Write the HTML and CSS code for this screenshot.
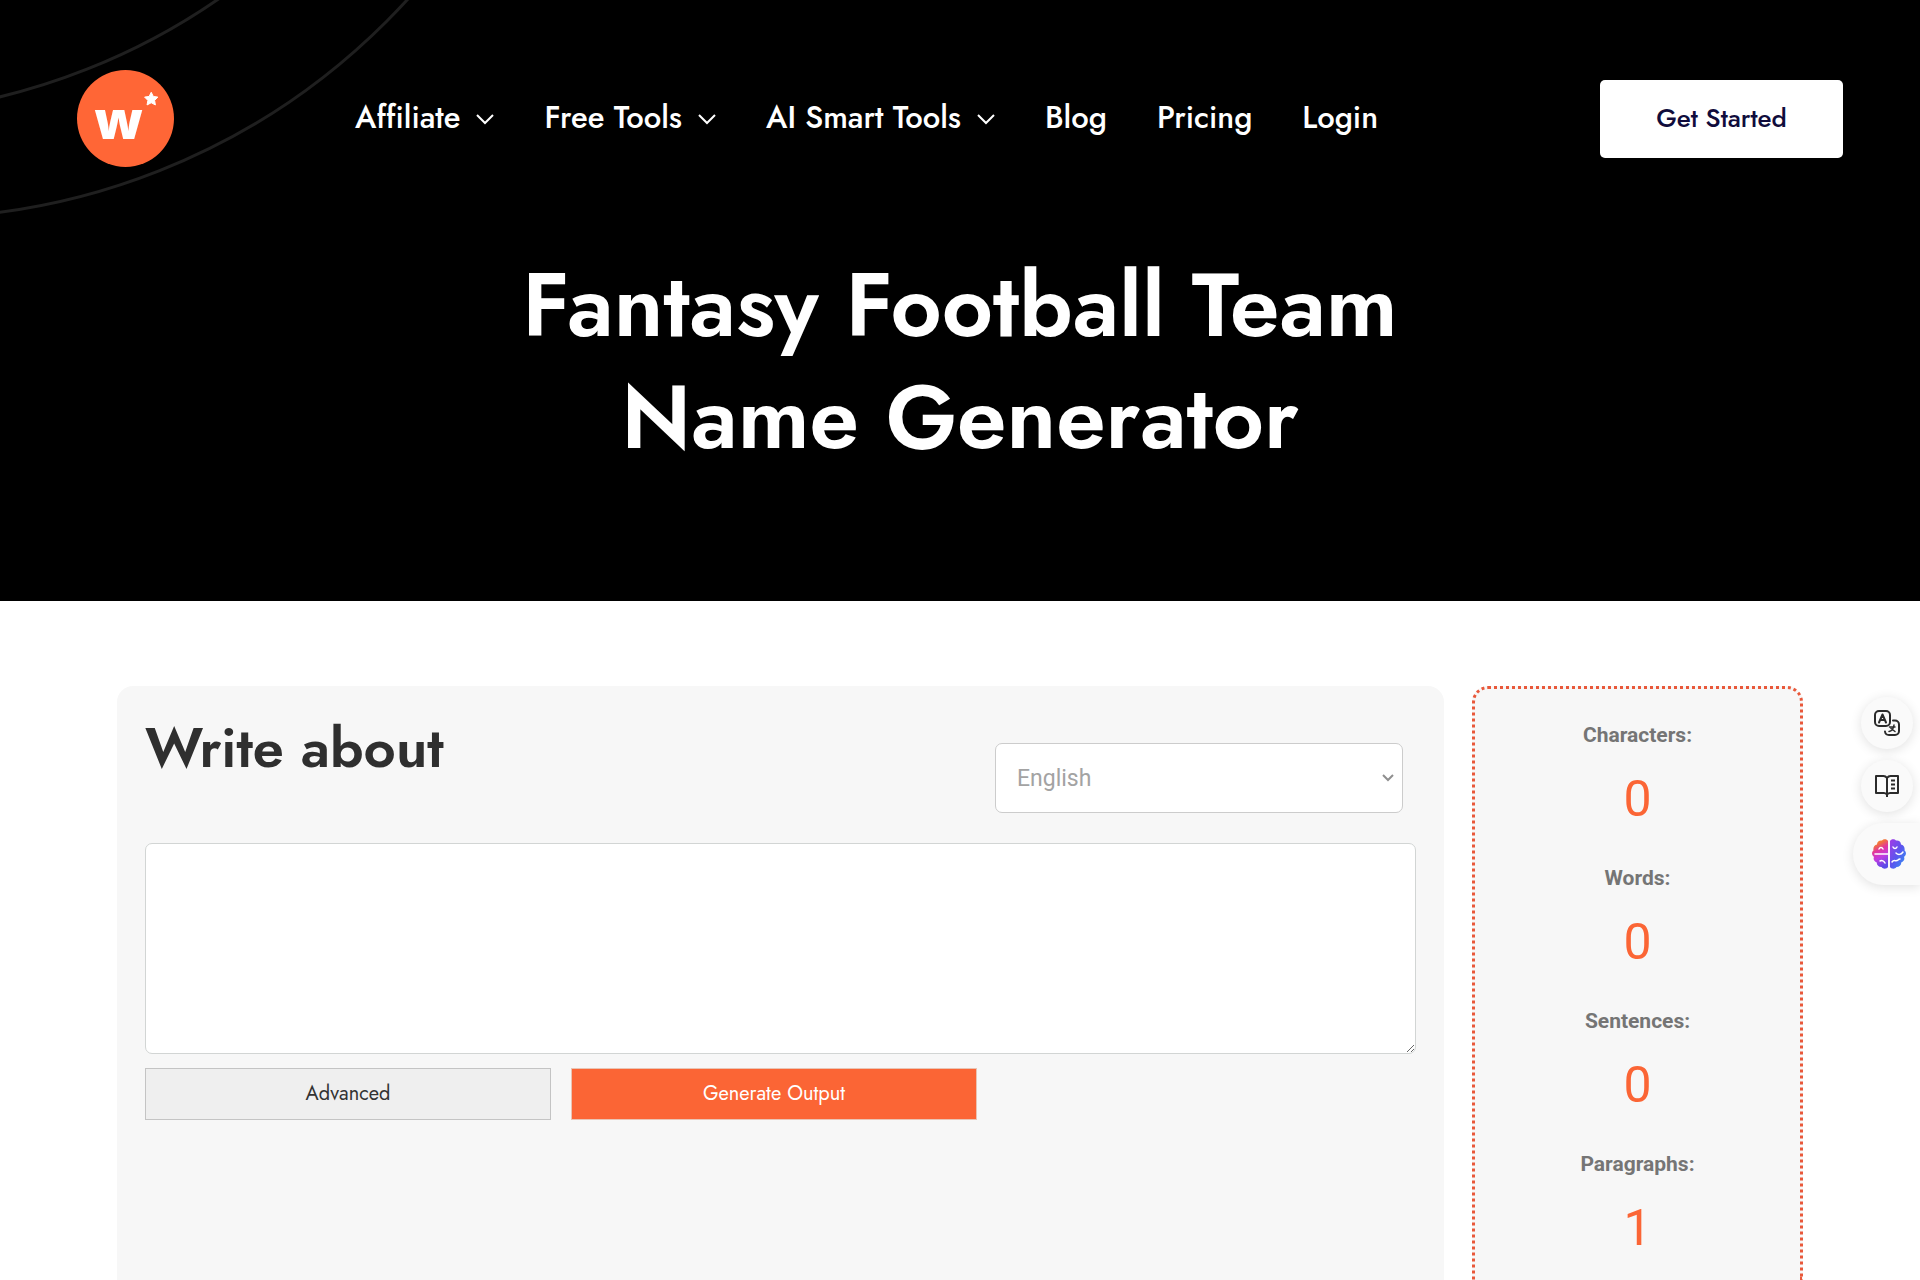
FILE: index.html
```html
<!DOCTYPE html>
<html lang="en">
<head>
  <meta charset="UTF-8">
  <meta name="viewport" content="width=device-width, initial-scale=1.0">
  <title>Fantasy Football Team Name Generator</title>
  <link rel="stylesheet" href="styles.css">
</head>
<body>
  <!-- Hero -->
  <div class="hero">
    <svg class="hero-lines" width="480" height="240" viewBox="0 0 480 240" fill="none" stroke="#1f1f1f" stroke-width="3" aria-hidden="true">
      <circle cx="-153" cy="-537" r="652"/>
      <circle cx="-88" cy="-453" r="671"/>
    </svg>

    <header class="header">
      <a class="logo" href="#" aria-label="Home">
        <svg width="97" height="97" viewBox="0 0 98 98">
          <circle cx="49" cy="49" r="49" fill="#ff6636"/>
          <text class="logo-letter" x="42" y="70" text-anchor="middle">w</text>
          <path d="M75 22.500l2.100 4.200 4.600.7-3.300 3.300.8 4.600-4.200-2.200-4.200 2.200.8-4.600-3.300-3.300 4.600-.7z" fill="#fff" stroke="#fff" stroke-linejoin="round"/>
        </svg>
      </a>
      <nav class="nav">
        <a href="#">Affiliate <svg class="chevron" viewBox="0 0 18 12"><path d="M1 2l8 8 8-8"/></svg></a>
        <a href="#">Free Tools <svg class="chevron" viewBox="0 0 18 12"><path d="M1 2l8 8 8-8"/></svg></a>
        <a href="#">AI Smart Tools <svg class="chevron" viewBox="0 0 18 12"><path d="M1 2l8 8 8-8"/></svg></a>
        <a href="#">Blog</a>
        <a href="#">Pricing</a>
        <a href="#">Login</a>
      </nav>
      <a class="get-started" href="#">Get Started</a>
    </header>

    <h1>Fantasy Football Team Name Generator</h1>
  </div>

  <!-- Tool -->
  <main class="tool">
    <form class="panel">
      <div class="panel-head">
        <h2><label for="about">Write about</label></h2>
        <div class="language">
          <select aria-label="Language">
            <option>English</option>
          </select>
          <svg class="language-arrow" viewBox="0 0 14 10" aria-hidden="true"><path d="M2 2l5 5 5-5"/></svg>
        </div>
      </div>
      <textarea id="about"></textarea>
      <div class="actions">
        <button type="button" class="btn">Advanced</button>
        <button type="button" class="btn btn-primary">Generate Output</button>
      </div>
    </form>

    <dl class="stats">
      <div><dt>Characters:</dt><dd id="characters">0</dd></div>
      <div><dt>Words:</dt><dd id="words">0</dd></div>
      <div><dt>Sentences:</dt><dd id="sentences">0</dd></div>
      <div><dt>Paragraphs:</dt><dd id="paragraphs">1</dd></div>
    </dl>
  </main>

  <!-- Floating buttons -->
  <aside class="side">
    <button type="button" class="side-btn" aria-label="Translate">
      <svg width="26" height="26" viewBox="0 0 26 26" fill="none" stroke="#2b2b2b" stroke-width="2" stroke-linecap="round" stroke-linejoin="round">
        <rect x="1" y="1" width="15" height="15" rx="4"/>
        <path d="M5 12.500l3.500-8 3.500 8M6.200 10h4.600"/>
        <path d="M19 10.500h2a4 4 0 0 1 4 4V21a4 4 0 0 1-4 4h-6a4 4 0 0 1-4-3.500"/>
        <path d="M15 21.500c3-.5 4.500-3 5-6.500M15.500 17h5.500M17 18.500l4 3" stroke-width="1.500"/>
      </svg>
    </button>
    <button type="button" class="side-btn" aria-label="Read">
      <svg width="26" height="24" viewBox="0 0 26 24" fill="none" stroke="#2b2b2b" stroke-width="2" stroke-linejoin="round">
        <path d="M13 4c-1-1.400-2-2-3.500-2H2v17h8c1.500 0 2.500.7 3 2 .5-1.300 1.500-2 3-2h8V2h-7.500C15 2 14 2.600 13 4zM13 4v19"/>
        <path d="M17 6.500h4M17 10.500h4M17 14.500h4"/>
      </svg>
    </button>
    <button type="button" class="side-btn side-tab" aria-label="Assistant">
      <svg width="34" height="32" viewBox="0 0 34 32">
        <defs>
          <linearGradient id="brainLeft" x1="0.200" y1="0" x2="0.500" y2="1">
            <stop offset="0" stop-color="#f9a02e"/>
            <stop offset="0.200" stop-color="#f2703f"/>
            <stop offset="0.400" stop-color="#e0369f"/>
            <stop offset="0.650" stop-color="#c23be0"/>
            <stop offset="1" stop-color="#5a4be8"/>
          </linearGradient>
          <linearGradient id="brainRight" x1="0" y1="0" x2="1" y2="1">
            <stop offset="0" stop-color="#a43be6"/>
            <stop offset="0.500" stop-color="#5a55ee"/>
            <stop offset="1" stop-color="#2f9df4"/>
          </linearGradient>
        </defs>
        <path fill="url(#brainLeft)" d="M16 3v26c-1 2-5 2.500-6.500 0-3 0-5-2-4.700-4.500C2 23.500 1 21 2 19-.5 17-.5 14 1.500 12.500.8 9.500 2.500 7 5 6.500 5 3.500 7.500 2 10 2.500 11.500.5 15 .8 16 3z"/>
        <path fill="url(#brainRight)" d="M18 3v26c1 2 5 2.500 6.500 0 3 0 5-2 4.700-4.500 2.800-1 3.800-3.500 2.800-5.500 2.500-2 2.500-5 .5-6.500.7-3-1-5.500-3.500-6 0-3-2.500-4.500-5-4C22.500.5 19 .8 18 3z"/>
        <path fill="none" stroke="#fff" stroke-width="1.500" stroke-linecap="round" d="M3 16h13M7 11c1-2 3-2 4 0M8 23c2-1 4 0 5 2M21 9c1 2 3 2 4 0M31 14c-2 3-5 3-7 1M20 24c2-3 4 0 6-2 1-1 2-1 2-1"/>
      </svg>
    </button>
  </aside>
</body>
</html>
```
FILE: styles.css
```css
* {
  box-sizing: border-box;
}
body {
  margin: 0;
  min-height: 100vh;
  display: flex;
  flex-direction: column;
  background-color: #fff;
  font-family: Roboto, sans-serif;
}
h1, h2, .nav, .get-started, .btn {
  font-family: Jost, Lato, sans-serif;
}

/* Hero */
.hero {
  position: relative;
  padding: 70px 77px 128px;
  background-color: #000;
  color: #fff;
}
.hero-lines {
  position: absolute;
  top: 0;
  left: 0;
}
.header {
  position: relative;
  display: flex;
  align-items: center;
}
.logo, .logo svg {
  display: block;
}
.logo-letter {
  font-family: "Open Sans", sans-serif;
  font-size: 54px;
  font-weight: 800;
  fill: #fff;
}
.nav {
  display: flex;
  gap: 50px;
  margin-left: 181px;
  padding-bottom: 2px;
  font-size: 31px;
  font-weight: 500;
}
.nav a {
  display: flex;
  align-items: center;
  gap: 16px;
  color: #fff;
  text-decoration: none;
}
.chevron {
  width: 18px;
  height: 12px;
  margin-top: 2px;
  fill: none;
  stroke: #fff;
  stroke-width: 2;
}
.get-started {
  width: 243px;
  margin-left: auto;
  padding-bottom: 2px;
  border-radius: 5px;
  background-color: #fff;
  color: #100c3c;
  font-size: 26px;
  font-weight: 500;
  line-height: 76px;
  text-align: center;
  text-decoration: none;
}
h1 {
  max-width: 960px;
  margin: 82px auto 0;
  font-size: 89px;
  font-weight: 600;
  line-height: 112px;
  text-align: center;
}

/* Tool */
.tool {
  flex: 1;
  display: flex;
  gap: 28px;
  padding: 85px 117px 0;
}
.panel {
  flex: 1;
  padding: 26px 28px 0;
  border-radius: 16px 16px 0 0;
  background-color: #f7f7f7;
}
.panel-head {
  display: flex;
  justify-content: space-between;
  padding-right: 13px;
}
h2 {
  margin: 0;
  color: #2f2f2f;
  font-size: 56px;
  font-weight: 600;
  line-height: 72px;
}
.language {
  position: relative;
  margin-top: 31px;
}
.language select {
  width: 408px;
  height: 70px;
  padding: 0 21px;
  border: 1px solid #ccc;
  border-radius: 7px;
  appearance: none;
  background-color: #fff;
  color: #a3a3a3;
  font-family: Roboto, sans-serif;
  font-size: 23px;
}
.language-arrow {
  position: absolute;
  top: 30px;
  right: 8px;
  width: 14px;
  height: 10px;
  fill: none;
  stroke: #8f8f8f;
  stroke-width: 2;
  pointer-events: none;
}
textarea {
  display: block;
  width: 100%;
  height: 211px;
  margin-top: 30px;
  padding: 16px;
  border: 1px solid #d2d5d4;
  border-radius: 7px;
  background-color: #fff;
  font-family: Roboto, sans-serif;
  font-size: 23px;
}
.actions {
  display: flex;
  gap: 20px;
  margin-top: 14px;
}
.btn {
  width: 406px;
  height: 52px;
  padding: 0 0 2px;
  border: 1px solid #c4c4c4;
  background-color: #efefef;
  color: #333;
  font-size: 20px;
  cursor: pointer;
}
.btn-primary {
  border-color: #e9c4b4;
  background-color: #fb6535;
  color: #fff;
}
.stats {
  width: 331px;
  margin: 0;
  padding-top: 27px;
  border: 3px dotted #e9583a;
  border-bottom: 0;
  border-radius: 16px 16px 0 0;
  background-color: #f7f7f7;
  text-align: center;
}
.stats div + div {
  margin-top: 24px;
}
dt {
  color: #757575;
  font-size: 21px;
  font-weight: 700;
  line-height: 38px;
}
dd {
  margin: 0;
  padding-top: 9px;
  color: #fb6535;
  font-size: 50px;
  line-height: 72px;
}

/* Floating buttons */
.side {
  position: fixed;
  top: 697px;
  right: 0;
  display: flex;
  flex-direction: column;
  align-items: flex-end;
  gap: 11px;
}
.side-btn {
  display: flex;
  align-items: center;
  justify-content: center;
  width: 52px;
  height: 52px;
  margin-right: 7px;
  padding: 0;
  border: 0;
  border-radius: 26px;
  background-color: #fafafa;
  box-shadow: 0 2px 12px rgba(0, 0, 0, 0.12);
  cursor: pointer;
}
.side-tab {
  width: 67px;
  height: 62px;
  margin-right: 0;
  padding-left: 5px;
  border-radius: 31px 0 0 31px;
}
```
